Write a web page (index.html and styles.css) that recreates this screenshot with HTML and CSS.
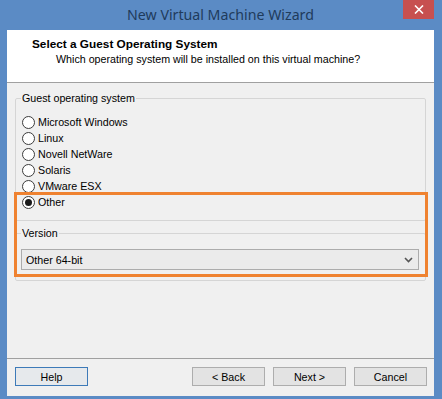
FILE: index.html
```html
<!doctype html>
<html lang="en">
<head>
<meta charset="utf-8">
<title>New Virtual Machine Wizard</title>
<link rel="stylesheet" href="styles.css">
</head>
<body>
	<div class="window">
		<div class="titlebar">
			<span class="title">New Virtual Machine Wizard</span>
			<div class="close">
				<svg width="10" height="9" viewBox="0 0 10 9"><path d="M1 0.5 L9 8.5 M9 0.5 L1 8.5" stroke="#fff" stroke-width="1.6"/></svg>
			</div>
		</div>
		<div class="client">
			<div class="header">
				<div class="htitle">Select a Guest Operating System</div>
				<div class="hsub">Which operating system will be installed on this virtual machine?</div>
			</div>
			<div class="main">
				<fieldset class="group osgroup">
					<legend>Guest operating system</legend>
					<div class="radio"><span class="dot"></span>Microsoft Windows</div>
					<div class="radio"><span class="dot"></span>Linux</div>
					<div class="radio"><span class="dot"></span>Novell NetWare</div>
					<div class="radio"><span class="dot"></span>Solaris</div>
					<div class="radio"><span class="dot"></span>VMware ESX</div>
					<div class="radio"><span class="dot checked"></span>Other</div>
				</fieldset>
				<fieldset class="group versiongroup">
					<legend>Version</legend>
					<div class="combo">
						<span>Other 64-bit</span>
						<svg width="9" height="6" viewBox="0 0 9 6"><path d="M1 1 L4.5 4.5 L8 1" fill="none" stroke="#555" stroke-width="1.6"/></svg>
					</div>
				</fieldset>
				<div class="highlight"></div>
			</div>
			<div class="footer">
				<div class="btn default">Help</div>
				<div class="spacer"></div>
				<div class="btn">&lt; Back</div>
				<div class="btn">Next &gt;</div>
				<div class="btn">Cancel</div>
			</div>
		</div>
	</div>
</body>
</html>
```

FILE: styles.css
```css
body, html {
	margin: 0;
}

body {
	font-family: "Liberation Sans", Arial, sans-serif;
	font-size: 10.7px;
	color: #000;
}

/* window frame */
.window {
	width: 442px;
	height: 399px;
	box-sizing: border-box;
	background: #5b8bc5;
	padding: 0 8px 3px 7px;
	display: flex;
	flex-direction: column;
}

.titlebar {
	height: 30px;
	display: grid;
	grid-template-columns: 1fr auto 1fr;
	flex: none;
}
.title {
	grid-column: 2;
	align-self: center;
	font-family: "Noto Sans", "Open Sans", sans-serif;
	font-size: 14.2px;
	color: #1f3b5c;
	padding-bottom: 1px;
}
.close {
	grid-column: 3;
	justify-self: end;
	width: 31px;
	height: 19px;
	background: #c75050;
	display: flex;
	align-items: center;
	justify-content: center;
}

.client {
	flex: 1;
	background: #f0f0f0;
	display: flex;
	flex-direction: column;
}

/* header strip */
.header {
	height: 52px;
	background: #fff;
	border-bottom: 1px solid #a0a0a0;
}
.htitle {
	font-weight: bold;
	font-size: 11.8px;
	line-height: 14px;
	padding: 7px 0 0 25px;
}
.hsub {
	line-height: 14px;
	padding: 1px 0 0 49px;
}

/* group boxes */
.main {
	flex: 1;
	position: relative;
}
.group {
	margin: 0 8px;
	padding: 0 6px 0 5px;
	border: 1px solid #d5d5d5;
	border-radius: 2px;
	min-width: 0;
}
.group legend {
	padding: 0 1px;
	line-height: 14px;
}
.osgroup {
	margin-top: 8px;
	padding-top: 9px;
	padding-bottom: 10px;
}
.versiongroup {
	margin-top: 5px;
	padding-top: 9px;
	padding-bottom: 10px;
}

.radio {
	height: 16px;
	display: flex;
	align-items: center;
	gap: 3px;
}
.dot {
	width: 11px;
	height: 11px;
	margin-left: 1px;
	border: 1px solid #3c3c3c;
	border-radius: 50%;
	background: #fff;
	display: flex;
	align-items: center;
	justify-content: center;
}
.dot.checked::after {
	content: "";
	width: 7px;
	height: 7px;
	border-radius: 50%;
	background: #1a1a1a;
}

.combo {
	height: 19px;
	border: 1px solid #acacac;
	background: #ebebeb;
	display: flex;
	align-items: center;
	justify-content: space-between;
	padding: 0 5px 0 4px;
}

/* orange annotation box */
.highlight {
	position: absolute;
	left: 7px;
	top: 109px;
	width: 408px;
	height: 79px;
	border: 3px solid #ef8230;
}

/* buttons */
.footer {
	flex: none;
	border-top: 1px solid #a0a0a0;
	padding: 8px 7px 10px 8px;
	display: flex;
	gap: 8px;
}
.spacer {
	flex: 1;
}
.btn {
	width: 71px;
	height: 17px;
	border: 1px solid #adadad;
	background: #e3e3e3;
	display: flex;
	align-items: center;
	justify-content: center;
}
.btn.default {
	border-color: #3d7ab8;
	background: #e6e9ec;
}
```
